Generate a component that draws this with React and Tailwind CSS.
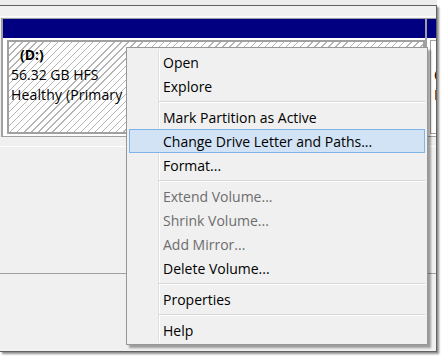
const hatch =
  "bg-[repeating-linear-gradient(135deg,#ffffff_0px,#ffffff_4px,#b4b4b4_4px,#b4b4b4_5px)]";

const menu = [
  { label: "Open" },
  { label: "Explore" },
  { sep: true },
  { label: "Mark Partition as Active" },
  { label: "Change Drive Letter and Paths...", active: true },
  { label: "Format..." },
  { sep: true },
  { label: "Extend Volume...", disabled: true },
  { label: "Shrink Volume...", disabled: true },
  { label: "Add Mirror...", disabled: true },
  { label: "Delete Volume..." },
  { sep: true },
  { label: "Properties" },
  { sep: true },
  { label: "Help" },
];

function ContextMenu() {
  return (
    <div className="absolute left-[126px] top-[47px] w-[302px] h-[298px] bg-[#f0f0f0] border border-[#979797] shadow-[3px_3px_2px_rgba(0,0,0,0.35)] p-[2px]">
      {/* icon gutter */}
      <div className="absolute left-[31px] top-[2px] bottom-[2px] w-[1px] bg-[#dedede]" />
      <div className="absolute left-[32px] top-[2px] bottom-[2px] w-[1px] bg-white" />

      <div className="relative flex flex-col">
        {menu.map((item, i) =>
          item.sep ? (
            <div key={i} className="h-[7px] pt-[3px] pl-[30px]">
              <div className="h-[1px] bg-[#d7d7d7]" />
              <div className="h-[1px] bg-white" />
            </div>
          ) : (
            <div
              key={i}
              className={`h-[24px] flex items-center pl-[33px] text-[14px] ${
                item.active
                  ? "bg-[#d1e3f5] border border-[#82b3e8]"
                  : "border border-transparent"
              } ${item.disabled ? "text-[#6d6d6d]" : "text-black"}`}
            >
              {item.label}
            </div>
          )
        )}
      </div>
    </div>
  );
}

export default function App() {
  return (
    <div className="relative w-[441px] h-[357px] bg-white overflow-hidden font-['Open_Sans',sans-serif]">
      <div className="h-[5px] w-[437px] bg-[#ececec]" />

      {/* captured window */}
      <div className="w-[437px] h-[347px] bg-[#f0f0f0] border-t border-r border-b border-[#626262] shadow-[2px_2px_2px_rgba(0,0,0,0.45)] overflow-hidden flex flex-col">
        <div className="h-[10px]" />
        <div className="h-[1px] bg-white" />
        <div className="h-[1px]" />

        {/* disk row */}
        <div className="flex h-[119px]">
          <div className="ml-[1px] w-[425px] shrink-0 flex flex-col border-l-2 border-r border-t border-b border-[#a0a0a0]">
            <div className="h-[19px] bg-[#000080]" />
            <div className="flex-1 bg-white pt-[2px] pb-[2px] pl-[4px]">
              <div className={`h-[94px] border-2 border-[#a0a0a0] ${hatch} pl-[2px] pt-[3px] text-[14px] leading-[20px] text-black whitespace-nowrap overflow-hidden`}>
                <div className="pl-[9px] font-bold">(D:)</div>
                <div>56.32 GB HFS</div>
                <div className="tracking-[0.15px]">Healthy (Primary Partition)</div>
              </div>
            </div>
          </div>

          <div className="w-[20px] shrink-0 flex flex-col border-l border-t border-b border-[#a0a0a0]">
            <div className="h-[19px] bg-[#000080]" />
            <div className="flex-1 bg-white pt-[2px] pb-[2px] pl-[3px]">
              <div className="h-[94px] border border-[#a0a0a0] bg-white pl-[3px] pt-[4px] text-[14px] leading-[20px] text-black whitespace-nowrap overflow-hidden">
                <div className="pl-[9px] font-bold">&nbsp;</div>
                <div>60.00 GB NTFS</div>
                <div>Healthy (Boot)</div>
              </div>
            </div>
          </div>
        </div>

        <div className="h-[9px]" />
        <div className="h-[1px] bg-white" />
        <div className="h-[126px]" />
        <div className="flex-1 border-t border-[#a0a0a0]" />
      </div>

      <ContextMenu />
    </div>
  );
}
